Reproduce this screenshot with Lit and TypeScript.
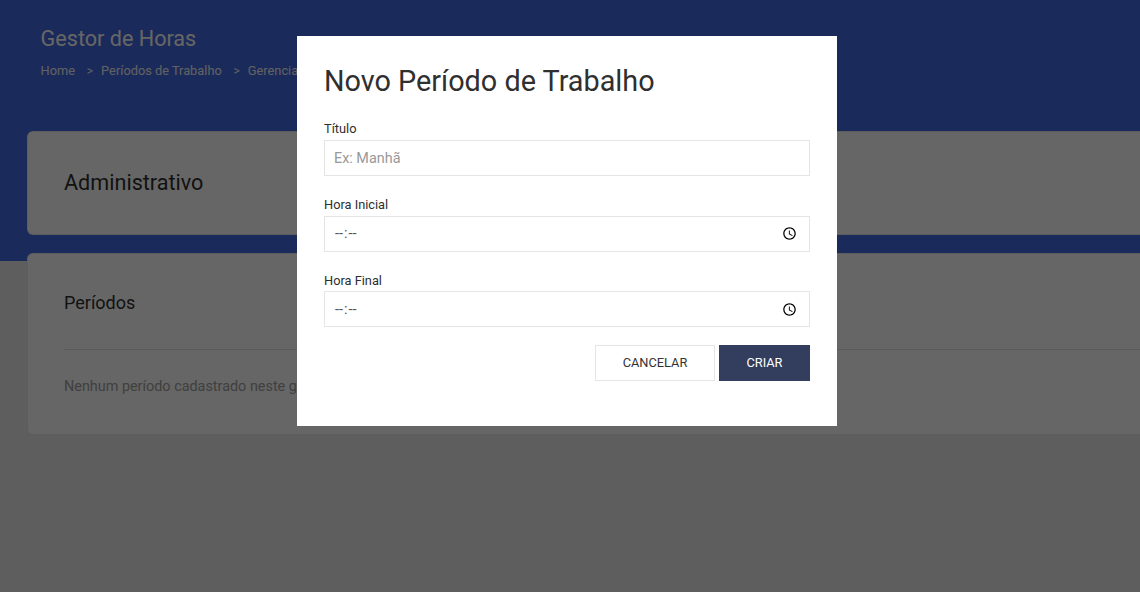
import { LitElement, html, css } from "lit";
import { customElement } from "lit/decorators.js";

@customElement("app-root")
export class AppRoot extends LitElement {
  static styles = css`
    :host {
      display: block;
      position: relative;
      height: 592px;
      overflow: hidden;
      background: #ececec;
      font-family: Roboto, "Liberation Sans", sans-serif;
      color: #2f2f2f;
    }
    * { box-sizing: border-box; }
    .hero {
      height: 261px;
      background: #4169e1;
      padding: 26px 40.6px 0;
    }
    .hero h1 {
      margin: 0;
      font-size: 21.6px;
      line-height: 26px;
      font-weight: 400;
      color: #fff;
    }
    .crumbs {
      display: flex;
      margin-top: 11px;
      font-size: 12.8px;
      line-height: 16px;
      color: #f4f4f4;
      white-space: nowrap;
    }
    .sep { margin: 0 8px 0 11.8px; font-size: 12px; }
    .cards {
      display: flex;
      flex-direction: column;
      gap: 18px;
      margin: -130px -40px 0 27px;
    }
    .card {
      background: #fff;
      border: 1px solid rgba(0, 0, 0, 0.09);
      border-radius: 6px;
      padding: 0 36px;
    }
    .top { height: 104px; display: flex; align-items: center; padding-bottom: 2px; }
    .top h2 { margin: 0; font-size: 21.6px; font-weight: 400; color: #2f2f2f; }
    .periods { height: 181.6px; }
    .periods h3 {
      margin: 0;
      height: 96px;
      padding-top: 38px;
      font-size: 18px;
      line-height: 21px;
      font-weight: 400;
      border-bottom: 1px solid #e2e2e2;
    }
    .periods p {
      margin: 28px 0 0;
      font-size: 14.4px;
      line-height: 18px;
      color: #a0a0a0;
    }
    .overlay {
      position: absolute;
      inset: 0;
      background: rgba(0, 0, 0, 0.6);
      display: flex;
      justify-content: center;
      align-items: flex-start;
      padding: 36px 6px 0 0;
    }
    .modal {
      width: 540px;
      height: 390px;
      background: #fff;
      padding: 27px;
    }
    .modal h2 {
      margin: 0 0 20.4px;
      font-size: 28.8px;
      line-height: 36px;
      font-weight: 400;
      color: #2f2f2f;
    }
    .field { display: flex; flex-direction: column; margin-bottom: 19px; }
    label {
      font-size: 12.8px;
      line-height: 19.2px;
      margin-bottom: 1.4px;
      color: #2f2f2f;
    }
    input {
      width: 100%;
      height: 36px;
      border: 1px solid #e5e5e5;
      border-radius: 0;
      outline: none;
      padding: 0 9px;
      font: 14.4px Roboto, "Liberation Sans", sans-serif;
      color: #555;
      background: #fff;
    }
    input[type="text"] { padding-top: 1px; }
    input::placeholder { color: #999; }
    input::-webkit-datetime-edit-ampm-field { display: none; }
    .actions { display: flex; justify-content: flex-end; gap: 4px; margin-top: -1px; }
    button {
      height: 36px;
      font: 12.8px Roboto, "Liberation Sans", sans-serif;
      text-transform: uppercase;
      border-radius: 0;
      padding: 0 0 1px;
    }
    .cancel { width: 120px; background: #fff; border: 1px solid #e5e5e5; color: #333; }
    .create { width: 91px; background: #333d5e; border: 0; color: #fff; }
  `;

  render() {
    return html`
      <div class="hero">
        <h1>Gestor de Horas</h1>
        <div class="crumbs">
          <span>Home</span><span class="sep">&gt;</span>
          <span>Períodos de Trabalho</span><span class="sep">&gt;</span>
          <span>Gerenciar</span>
        </div>
      </div>
      <div class="cards">
        <section class="card top"><h2>Administrativo</h2></section>
        <section class="card periods">
          <h3>Períodos</h3>
          <p>Nenhum período cadastrado neste grupo.</p>
        </section>
      </div>
      <div class="overlay">
        <div class="modal" lang="pt-BR">
          <h2>Novo Período de Trabalho</h2>
          <div class="field">
            <label>Título</label>
            <input type="text" placeholder="Ex: Manhã" />
          </div>
          <div class="field">
            <label>Hora Inicial</label>
            <input type="time" />
          </div>
          <div class="field">
            <label>Hora Final</label>
            <input type="time" />
          </div>
          <div class="actions">
            <button class="cancel">Cancelar</button>
            <button class="create">Criar</button>
          </div>
        </div>
      </div>
    `;
  }
}
